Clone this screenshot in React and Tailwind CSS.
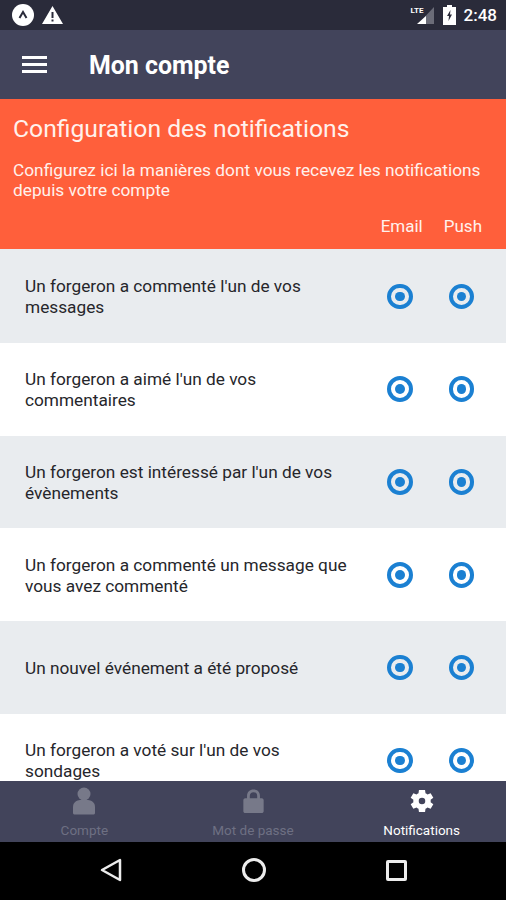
import React from 'react';

const rows = [
  ['Un forgeron a commenté l\'un de vos', 'messages'],
  ['Un forgeron a aimé l\'un de vos', 'commentaires'],
  ['Un forgeron est intéressé par l\'un de vos', 'évènements'],
  ['Un forgeron a commenté un message que', 'vous avez commenté'],
  ['Un nouvel événement a été proposé'],
  ['Un forgeron a voté sur l\'un de vos', 'sondages'],
];

const Radio = () => (
  <div className="w-[25.5px] h-[25.5px] rounded-full border-[4px] border-[#1b80d2] flex items-center justify-center">
    <div className="w-[9.5px] h-[9.5px] rounded-full bg-[#1b80d2]" />
  </div>
);

const Row = ({ lines, index }) => (
  <div className={`flex items-center shrink-0 h-[92.8px] pl-[25px] ${index % 2 === 0 ? 'bg-[#e9ecef]' : 'bg-white'}`}>
    <div className="flex-1 pt-[2px] text-[17.25px] leading-[21px] text-[#26262b]">
      {lines.map((line) => (
        <div key={line} className="whitespace-nowrap">{line}</div>
      ))}
    </div>
    <div className="flex gap-[36px] pr-[32px]">
      <Radio />
      <Radio />
    </div>
  </div>
);

const Tab = ({ label, active, icon }) => (
  <div className={`flex-1 flex flex-col items-center pt-[5px] text-[13.5px] leading-[16px] ${active ? 'text-white' : 'text-[#6e7083]'}`}>
    <div className="h-[30px] flex items-center justify-center">{icon}</div>
    <div className="mt-[6px]">{label}</div>
  </div>
);

const UserIcon = () => (
  <svg width="24" height="28" viewBox="0 0 24 28" fill="#777989">
    <circle cx="12" cy="7" r="6.5" />
    <path d="M1 26 V20 C1 15 5 13.5 8 13 H16 C19 13.5 23 15 23 20 V26 C23 27 22 27.5 21 27.5 H3 C2 27.5 1 27 1 26 Z" />
  </svg>
);

const LockIcon = () => (
  <svg width="21" height="24" viewBox="0 0 22 26" fill="#777989">
    <path fillRule="evenodd" d="M4 10 V7.5 C4 3 7 .5 11 .5 C15 .5 18 3 18 7.5 V10 H20 C21 10 22 11 22 12 V24 C22 25 21 26 20 26 H2 C1 26 0 25 0 24 V12 C0 11 1 10 2 10 Z M7 10 H15 V7.5 C15 5 13.5 3.5 11 3.5 C8.5 3.5 7 5 7 7.5 Z" />
  </svg>
);

const GearIcon = () => (
  <svg width="28" height="28" viewBox="0 0 24 24" fill="white">
    <path fillRule="evenodd" d="M19.4 13a7.5 7.5 0 0 0 0-2l2.3-1.8-2.3-3.9-2.7 1.1a7.5 7.5 0 0 0-1.7-1L14.6 2.5H9.4L9 5.4a7.5 7.5 0 0 0-1.7 1L4.6 5.3 2.3 9.2 4.6 11a7.5 7.5 0 0 0 0 2l-2.3 1.8 2.3 3.9 2.7-1.1c.5.4 1.1.7 1.7 1l.4 2.9h5.2l.4-2.9c.6-.3 1.2-.6 1.7-1l2.7 1.1 2.3-3.9zM12 14.8a2.8 2.8 0 1 1 0-5.6 2.8 2.8 0 0 1 0 5.6z" />
  </svg>
);

export default function App() {
  return (
    <div className="w-[506px] h-[900px] flex flex-col overflow-hidden font-['Roboto',sans-serif] bg-white">
      {/* status bar */}
      <div className="h-[30px] shrink-0 bg-[#2a2b3a] flex items-center pl-[12px] pr-[9px] text-white">
        <div className="w-[22px] h-[22px] rounded-full bg-white flex items-center justify-center">
          <svg width="12" height="12" viewBox="0 0 12 12" fill="none" stroke="#2a2b3a" strokeWidth="2">
            <path d="M2.5 9 L6 3 L9.5 9" />
          </svg>
        </div>
        <svg className="ml-[8px]" width="21" height="18" viewBox="0 0 21 18">
          <path fillRule="evenodd" fill="white" d="M10.5 0 L21 18 H0 Z M9.5 6 V12 H11.5 V6 Z M9.5 13.5 V15.5 H11.5 V13.5 Z" />
        </svg>
        <div className="flex-1" />
        <div className="relative w-[24px] h-[19px]">
          <svg width="24" height="19" viewBox="0 0 24 19">
            <path d="M23 1 V18 H7 Z" fill="#6b6c78" />
            <path d="M15 10 V18 H6 Z" fill="white" />
          </svg>
          <span className="absolute left-0 top-0 text-[8px] leading-[10px] font-bold">LTE</span>
        </div>
        <svg className="ml-[8px]" width="13" height="20" viewBox="0 0 13 20">
          <path fillRule="evenodd" fill="white" d="M4 0 H9 V2 H13 V20 H0 V2 H4 Z M7.5 5 L4 11 H6 L5.5 16 L9 9.5 H7 Z" />
        </svg>
        <span className="ml-[8px] text-[17px] font-medium leading-none">2:48</span>
      </div>

      {/* header */}
      <div className="h-[69px] shrink-0 bg-[#42445b] flex items-center pl-[22px] text-white">
        <div className="w-[25px] flex flex-col gap-[4px]">
          <div className="h-[3px] bg-white" />
          <div className="h-[3px] bg-white" />
          <div className="h-[3px] bg-white" />
        </div>
        <div className="ml-[42px] pt-[4px] text-[24.9px] font-bold leading-none">Mon compte</div>
      </div>

      {/* intro */}
      <div className="h-[150px] shrink-0 bg-[#ff5f3b] text-[#fff1ec] px-[13px] pt-[15px]">
        <div className="text-[24.7px] leading-[30px] whitespace-nowrap">Configuration des notifications</div>
        <div className="mt-[16px] text-[17.3px] leading-[20px] whitespace-nowrap">
          <div>Configurez ici la manières dont vous recevez les notifications</div>
          <div>depuis votre compte</div>
        </div>
        <div className="mt-[16px] flex justify-end gap-[21px] pr-[11px] text-[17px] leading-[20px]">
          <span>Email</span>
          <span>Push</span>
        </div>
      </div>

      {/* rows */}
      <div className="flex-1 min-h-0 overflow-hidden flex flex-col pt-[1px] bg-[#e9ecef]">
        {rows.map((lines, i) => (
          <Row key={lines[0]} lines={lines} index={i} />
        ))}
      </div>

      {/* tabs */}
      <div className="h-[61px] shrink-0 bg-[#42445b] flex">
        <Tab label="Compte" icon={<UserIcon />} />
        <Tab label="Mot de passe" icon={<LockIcon />} />
        <Tab label="Notifications" icon={<GearIcon />} active />
      </div>

      {/* android nav */}
      <div className="h-[58px] shrink-0 bg-black flex items-center justify-center gap-[120px] pb-[2px]">
        <svg width="22" height="24" viewBox="0 0 22 24" fill="none" stroke="#ececec" strokeWidth="2.5" strokeLinejoin="round">
          <path d="M20 2 V22 L2 12 Z" />
        </svg>
        <div className="w-[24px] h-[24px] rounded-full border-[3px] border-[#ececec]" />
        <div className="w-[21px] h-[21px] rounded-[2px] border-[3px] border-[#ececec]" />
      </div>
    </div>
  );
}
